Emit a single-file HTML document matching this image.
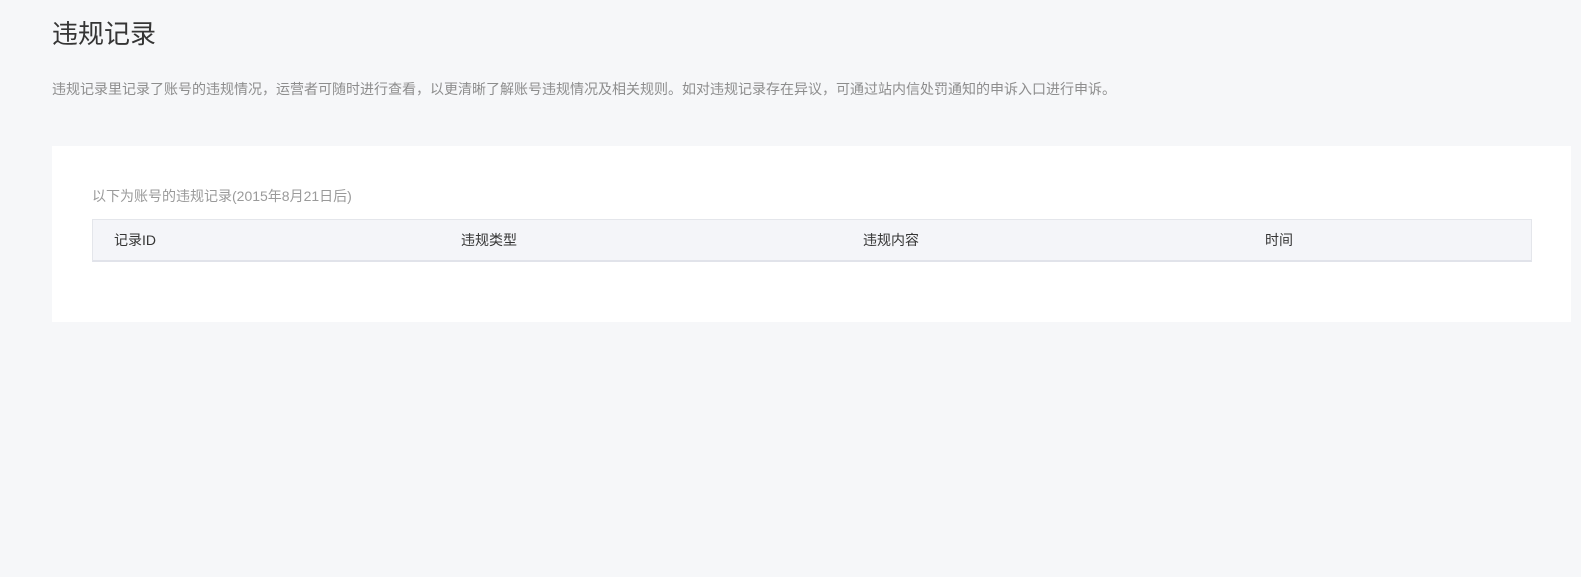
<!DOCTYPE html>
<html><head><meta charset="utf-8"><style>
body{margin:0;background:#f6f7f9;font-family:"Liberation Sans","Noto Sans CJK SC",sans-serif;width:1581px;height:577px;overflow:hidden;position:relative}
.h{position:absolute;left:52px;top:16px;font-size:26px;color:#353535;line-height:36px}
.d{position:absolute;left:52px;top:80px;font-size:14px;color:#8d8d8d;line-height:18px;white-space:nowrap}
.card{position:absolute;left:52px;top:146px;width:1519px;height:176px;background:#fff}
.s{position:absolute;left:40px;top:41px;font-size:14px;color:#9a9a9a;line-height:18px}
.t{position:absolute;left:40px;top:73px;width:1438px;height:40px;background:#f4f5f9;border:1px solid #e4e6eb;border-bottom:2px solid #e1e3ea}
.t span{position:absolute;top:11px;font-size:14px;color:#353535;line-height:18px}
</style></head><body>
<div class="h">违规记录</div>
<div class="d">违规记录里记录了账号的违规情况，运营者可随时进行查看，以更清晰了解账号违规情况及相关规则。如对违规记录存在异议，可通过站内信处罚通知的申诉入口进行申诉。</div>
<div class="card">
<div class="s">以下为账号的违规记录(2015年8月21日后)</div>
<div class="t"><span style="left:21px">记录ID</span><span style="left:368px">违规类型</span><span style="left:770px">违规内容</span><span style="left:1172px">时间</span></div>
</div>
</body></html>
